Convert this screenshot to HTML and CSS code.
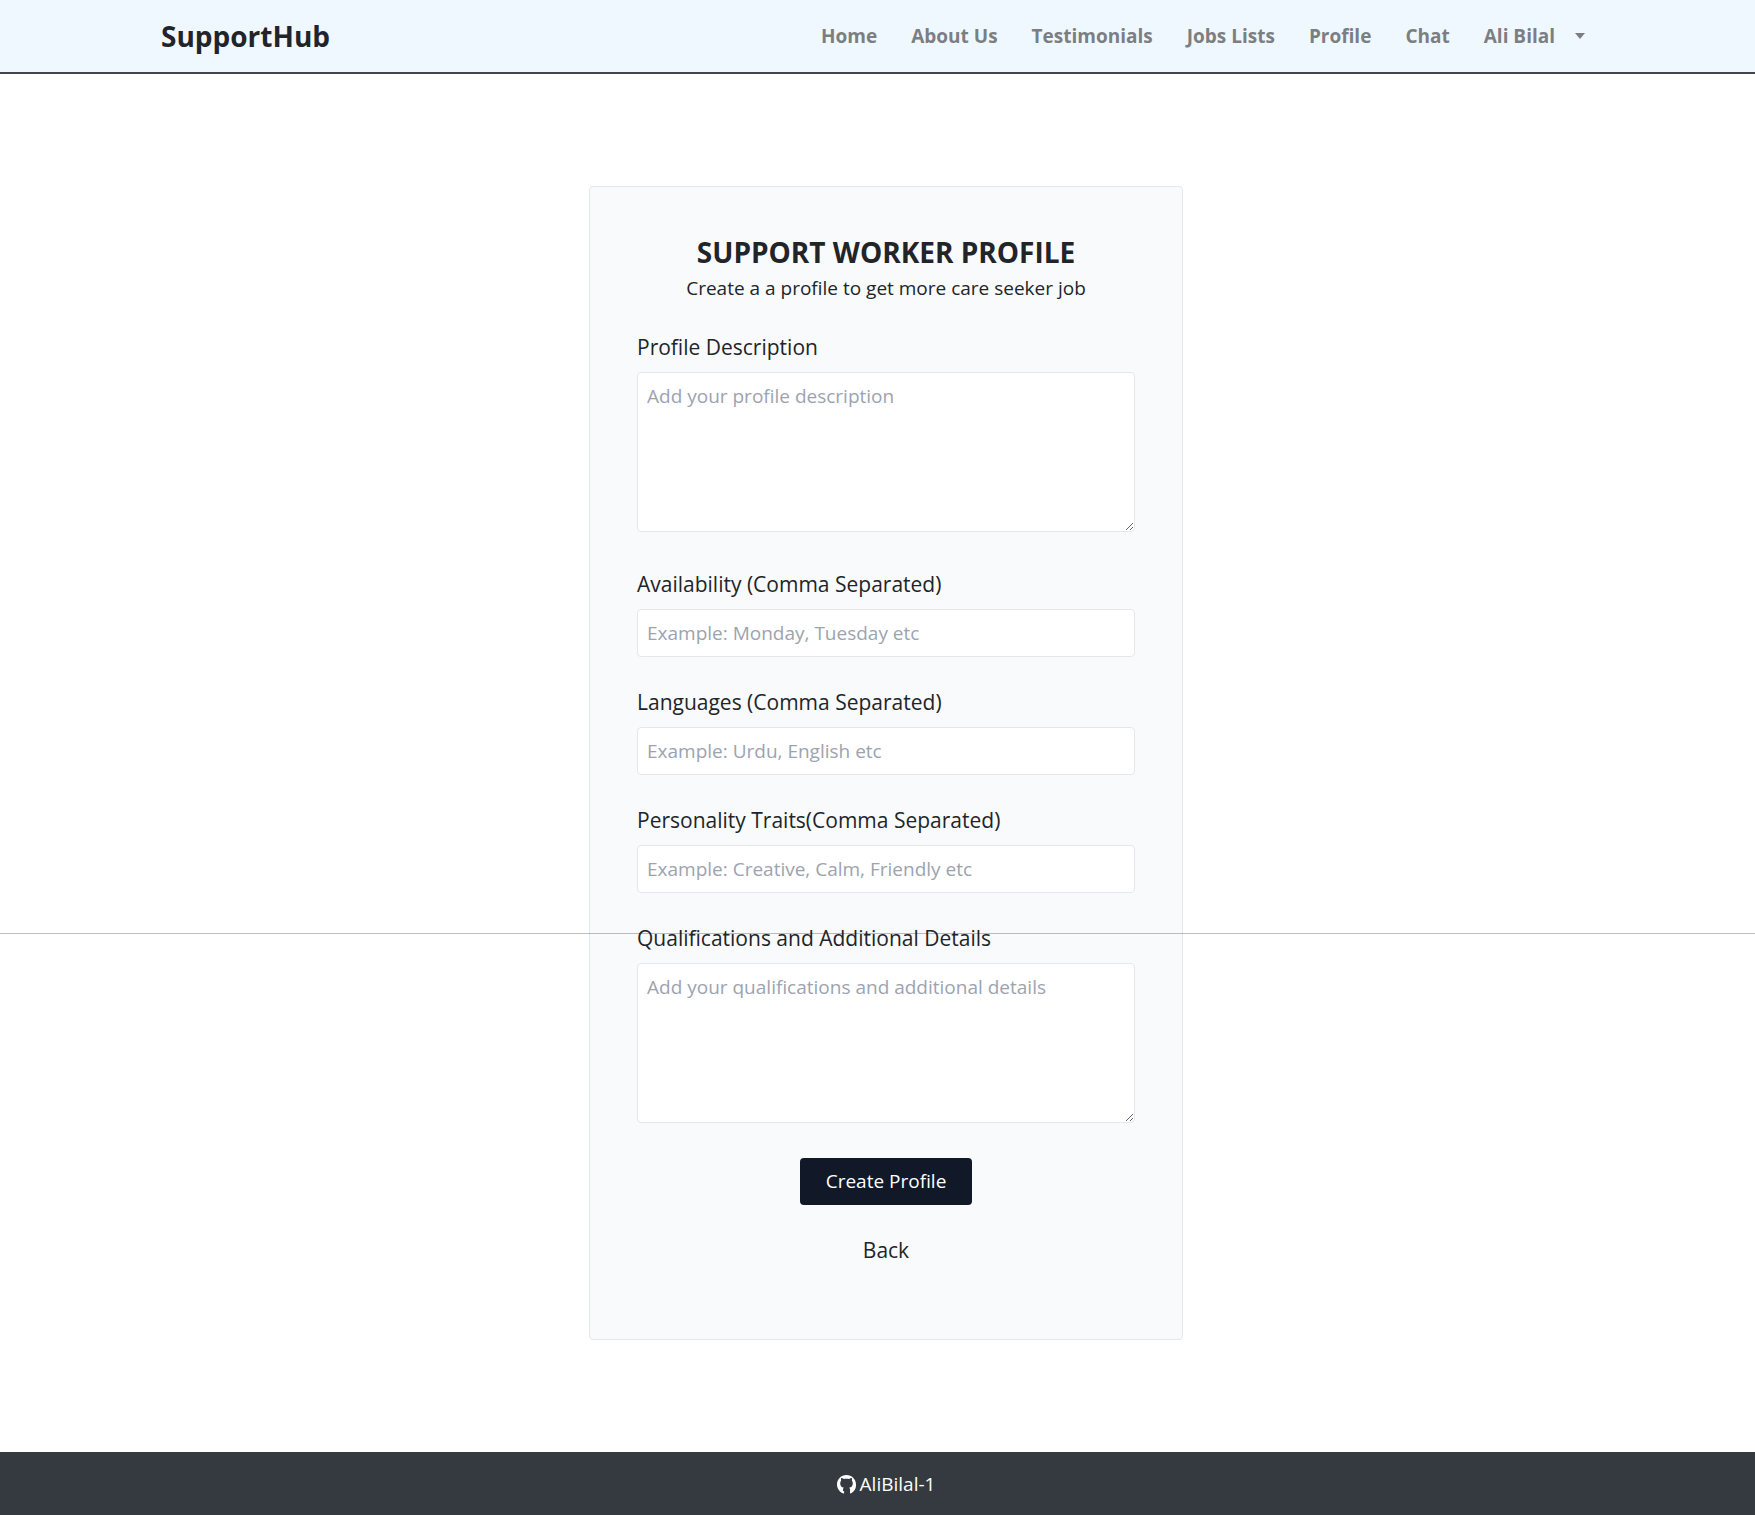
FILE: index.html
```html
<!DOCTYPE html>
<html lang="en">
<head>
<meta charset="utf-8">
<meta name="viewport" content="width=device-width, initial-scale=1">
<title>SupportHub</title>
<link rel="stylesheet" href="styles.css">
</head>
<body>
<header class="site-header">
  <a class="brand" href="#">SupportHub</a>
  <nav class="site-nav">
    <a href="#">Home</a>
    <a href="#">About Us</a>
    <a href="#">Testimonials</a>
    <a href="#">Jobs Lists</a>
    <a href="#">Profile</a>
    <a href="#">Chat</a>
    <button class="user-menu" type="button">Ali Bilal <span class="caret"></span></button>
  </nav>
</header>
<main class="page">
  <hr class="divider">
  <section class="card">
    <h1 class="card-title">SUPPORT WORKER PROFILE</h1>
    <p class="card-subtitle">Create a a profile to get more care seeker job</p>
    <form class="form">
      <div class="field field-first">
        <label for="description">Profile Description</label>
        <textarea id="description" placeholder="Add your profile description"></textarea>
      </div>
      <div class="field">
        <label for="availability">Availability (Comma Separated)</label>
        <input id="availability" type="text" placeholder="Example: Monday, Tuesday etc">
      </div>
      <div class="field">
        <label for="languages">Languages (Comma Separated)</label>
        <input id="languages" type="text" placeholder="Example: Urdu, English etc">
      </div>
      <div class="field">
        <label for="traits">Personality Traits(Comma Separated)</label>
        <input id="traits" type="text" placeholder="Example: Creative, Calm, Friendly etc">
      </div>
      <div class="field">
        <label for="qualifications">Qualifications and Additional Details</label>
        <textarea id="qualifications" placeholder="Add your qualifications and additional details"></textarea>
      </div>
      <div class="actions">
        <button class="submit" type="submit">Create Profile</button>
        <a class="back" href="#">Back</a>
      </div>
    </form>
  </section>
</main>
<footer class="site-footer">
  <a class="credit" href="#">
    <svg width="19" height="19" viewBox="0 0 16 16" fill="currentColor" aria-hidden="true"><path d="M8 0C3.58 0 0 3.58 0 8c0 3.54 2.29 6.53 5.47 7.59.4.07.55-.17.55-.38 0-.19-.01-.82-.01-1.49C5.5 13.8 5 13.7 5 12.5c0-.9.3-1.5.8-1.8-1.78-.2-3.1-1.1-3.1-3.9 0-.87.31-1.59.82-2.15-.08-.2-.36-1.02.08-2.12 0 0 .67-.21 2.2.82.64-.18 1.32-.27 2.2-.27.88 0 1.56.09 2.2.27 1.53-1.04 2.2-.82 2.2-.82.44 1.1.16 1.92.08 2.12.51.56.82 1.27.82 2.15 0 2.8-1.32 3.7-3.1 3.9.4.3.8.9.8 1.8 0 1.07-.01 2.2-.01 2.71 0 .21.15.46.55.38A8.013 8.013 0 0016 8c0-4.42-3.58-8-8-8z"/></svg>
    AliBilal-1
  </a>
</footer>
</body>
</html>
```
FILE: styles.css
```css
* {
  box-sizing: border-box;
}

body {
  margin: 0;
  min-height: 100vh;
  display: flex;
  flex-direction: column;
  background: #fff;
  color: #212529;
  font-family: "Open Sans", sans-serif;
  font-size: 19px;
  line-height: 28px;
}

a {
  color: inherit;
  text-decoration: none;
}

.site-header {
  display: flex;
  align-items: center;
  justify-content: space-between;
  padding: 18px 170px 18px 161px;
  background: #f0f8ff;
  border-bottom: 2px solid #43474c;
}

.brand {
  font-size: 28px;
  line-height: 36px;
  font-weight: 700;
}

.site-nav {
  display: flex;
  align-items: center;
  gap: 34px;
  color: #7b7f82;
  font-weight: 700;
}

.user-menu {
  display: flex;
  align-items: center;
  gap: 20px;
  padding: 0;
  border: 0;
  background: none;
  color: inherit;
  font: inherit;
}

.caret {
  border: 5px solid transparent;
  border-top: 6px solid currentColor;
  border-bottom: 0;
}

.page {
  position: relative;
  flex: 1;
  padding: 112px 0 112px 17px;
}

.divider {
  position: absolute;
  top: 859px;
  left: 0;
  right: 0;
  margin: 0;
  border: 0;
  border-top: 1px solid rgba(0, 0, 0, 0.25);
}

.card {
  max-width: 594px;
  margin: 0 auto;
  padding: 47px 47px 74px;
  background: #f9fafb;
  border: 1px solid #e5e7eb;
  border-radius: 4px;
}

.card-title {
  margin: 0;
  font-size: 28px;
  line-height: 36px;
  font-weight: 700;
  text-align: center;
}

.card-subtitle {
  margin: 4px 0 30px;
  text-align: center;
}

.form {
  display: flex;
  flex-direction: column;
  gap: 30px;
}

.field {
  display: flex;
  flex-direction: column;
  gap: 10px;
}

.field-first {
  margin-bottom: 7px;
}

.field label {
  font-size: 21px;
  line-height: 30px;
}

.field input,
.field textarea {
  width: 100%;
  height: 48px;
  padding: 9px;
  border: 1px solid #e5e7eb;
  border-radius: 4px;
  background: #fff;
  color: inherit;
  font: inherit;
}

.field textarea {
  height: 160px;
}

.field ::placeholder {
  color: #9ca3af;
}

.actions {
  display: flex;
  flex-direction: column;
  align-items: center;
  gap: 30px;
  margin-top: 5px;
}

.submit {
  padding: 9px 26px 10px;
  border: 0;
  border-radius: 4px;
  background: #111827;
  color: #fff;
  font: inherit;
}

.back {
  font-size: 21px;
  line-height: 30px;
}

.site-footer {
  display: flex;
  justify-content: center;
  padding: 18px 0 17px 17px;
  background: #343a40;
  color: #fff;
}

.credit {
  display: flex;
  align-items: center;
  gap: 4px;
}
```
